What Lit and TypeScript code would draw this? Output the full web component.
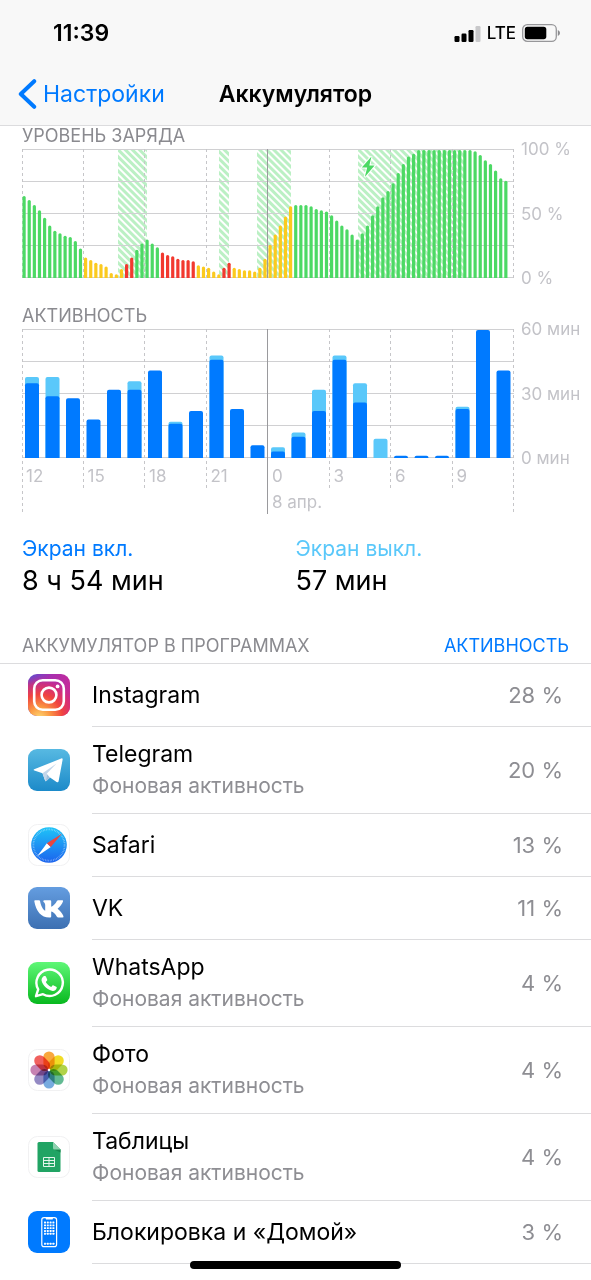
import { LitElement, html, svg, css, nothing, type SVGTemplateResult, type TemplateResult } from "lit";
import { customElement, property } from "lit/decorators.js";

type Tone = "green" | "yellow" | "red";

/** Charge level in percent, one sample every 15 minutes, grouped by colour. */
const CHARGE: Array<[Tone, number[]]> = [
  ["green", [64, 61, 57, 53, 47, 41, 37, 35, 33, 32, 29, 23]],
  ["yellow", [16, 14, 12, 11, 9, 4, 3, 7]],
  ["red", [11, 16]],
  ["green", [22, 27, 30, 27, 24]],
  ["red", [20, 18, 17, 15, 14, 14, 13]],
  ["yellow", [10, 9, 8, 5, 3]],
  ["red", [8, 12]],
  ["yellow", [8, 7, 6, 6, 5, 8, 15, 26, 34, 41, 48, 56]],
  [
    "green",
    [
      57, 57, 57, 56, 54, 53, 52, 49, 45, 41, 38, 34, 30, 35, 41, 49, 56, 63, 68, 74, 82, 89, 95, 97,
      100, 100, 100, 100, 100, 100, 100, 100, 100, 100, 100, 99, 96, 92, 89, 84, 78, 76,
    ],
  ],
];

/** Charging periods as [start, end] in plot units. */
const CHARGING: Array<[number, number]> = [[96, 125], [197, 207], [235, 269], [336, 442]];

/** Minutes of activity per hour as [screen on, total]. */
const ACTIVITY: Array<[number, number]> = [
  [35, 38], [29, 38], [28, 28], [18, 18], [32, 32], [32, 36], [41, 41], [16, 17],
  [22, 22], [46, 48], [23, 23], [6, 6], [3, 5], [10, 12], [22, 32], [46, 48],
  [26, 35], [0, 9], [1, 1], [1, 1], [1, 1], [23, 24], [60, 60], [41, 41],
];

const HOURS = ["12", "15", "18", "21", "0", "3", "6", "9"];

const W = 492;
const H = 129;
const MIDNIGHT = 4;

const gridLines = (height: number, tail: number): SVGTemplateResult => svg`
  ${[0, 1, 2, 3, 4].map((i) => svg`<line class="rule" x1="0" x2=${W} y1=${0.5 + i * 32} y2=${0.5 + i * 32} />`)}
  ${[0, 1, 2, 3, 4, 5, 6, 7, 8].map((i) => {
    const x = Math.floor((i * (W - 0.5)) / 8) + 0.5;
    const long = i % 4 === 0;
    return svg`<line class=${i === MIDNIGHT ? "midnight" : "dash"} x1=${x} x2=${x} y1="0" y2=${long ? height : height - tail} />`;
  })}
`;

const chartStyles = css`
  :host {
    display: block;
  }
  .title {
    margin: 0;
    font-size: 18px;
    line-height: 20px;
    font-weight: 400;
    color: #8a8a8f;
  }
  .chart {
    display: grid;
    grid-template-columns: minmax(0, 1fr) 70px;
    column-gap: 7px;
    margin-top: 3px;
  }
  .plot {
    display: block;
    width: 100%;
    height: auto;
  }
  .scale {
    display: flex;
    flex-direction: column;
    justify-content: space-between;
    height: 151px;
    margin: -11px 0;
    font-size: 17px;
    line-height: 22px;
    white-space: nowrap;
    color: #c3c3c8;
  }
  .rule {
    stroke: #d0d0d2;
    stroke-width: 1;
  }
  .dash {
    stroke: #c6c6c9;
    stroke-width: 1;
    stroke-dasharray: 3 3;
  }
  .midnight {
    stroke: #9a9a9d;
    stroke-width: 1;
  }
`;

@customElement("charge-chart")
export class ChargeChart extends LitElement {
  static styles = [
    chartStyles,
    css`
      .green {
        fill: #4cd964;
      }
      .yellow {
        fill: #fbca1f;
      }
      .red {
        fill: #f2392f;
      }
      .stripe {
        stroke: #bbf0c4;
        stroke-width: 3;
      }
      .halo {
        fill: #4cd964;
        stroke: #fff;
        stroke-width: 2;
        paint-order: stroke;
      }
    `,
  ];

  render() {
    const samples = CHARGE.flatMap(([tone, levels]) => levels.map((level) => ({ tone, level })));
    const step = W / 96;
    return html`
      <h2 class="title">УРОВЕНЬ ЗАРЯДА</h2>
      <div class="chart">
        <svg class="plot" viewBox="0 0 ${W} ${H}" role="img" aria-label="Уровень заряда">
          <defs>
            <pattern id="hatch" width="5" height="5" patternUnits="userSpaceOnUse" patternTransform="rotate(45)">
              <line class="stripe" x1="0" x2="5" y1="2.5" y2="2.5" />
            </pattern>
          </defs>
          ${CHARGING.map(([a, b]) => svg`<rect x=${a} y="0" width=${b - a} height=${H} fill="url(#hatch)" />`)}
          ${gridLines(H, 0)}
          ${samples.map(({ tone, level }, i) => {
            const h = (level / 100) * 128;
            const x = 0.5 + i * step;
            return svg`<path class=${tone} d="M${x} ${H}v${1.5 - h}q0 -1.5 1.6 -1.5t1.6 1.5v${h - 1.5}z" />`;
          })}
          <path class="halo" d="M349.5 7.5L339.8 18.5H345.2L342.8 28L352.6 16.5H347.3Z" />
        </svg>
        <div class="scale"><span>100 %</span><span>50 %</span><span>0 %</span></div>
      </div>
    `;
  }
}

@customElement("activity-chart")
export class ActivityChart extends LitElement {
  static styles = [
    chartStyles,
    css`
      .stack {
        display: grid;
      }
      .stack > * {
        grid-area: 1 / 1;
      }
      .on {
        fill: #007aff;
      }
      .off {
        fill: #5ac8fa;
      }
      .hours {
        align-self: end;
        display: grid;
        grid-template-columns: repeat(8, minmax(0, 1fr));
        height: 51px;
        font-size: 17px;
        line-height: 26px;
        color: #c3c3c8;
      }
      .hour {
        padding-left: 4px;
        white-space: nowrap;
      }
      .date {
        display: block;
      }
    `,
  ];

  render() {
    const slot = W / 24;
    const bar = (cls: string, i: number, minutes: number) => {
      const h = (minutes / 60) * 128;
      const r = Math.min(2, h);
      return minutes
        ? svg`<path class=${cls} d="M${i * slot + 3} ${H}v${r - h}q0 ${-r} ${r} ${-r}h${14 - 2 * r}q${r} 0 ${r} ${r}v${h - r}z" />`
        : nothing;
    };
    return html`
      <h2 class="title">АКТИВНОСТЬ</h2>
      <div class="chart">
        <div class="stack">
          <svg class="plot" viewBox="0 0 ${W} 185" role="img" aria-label="Активность">
            ${gridLines(185, 24)}
            ${ACTIVITY.map(([on, total], i) => [total > on ? bar("off", i, total) : nothing, bar("on", i, on)])}
          </svg>
          <div class="hours">
            ${HOURS.map(
              (h, i) => html`<div class="hour">${h}${i === MIDNIGHT ? html`<span class="date">8 апр.</span>` : nothing}</div>`,
            )}
          </div>
        </div>
        <div class="scale"><span>60 мин</span><span>30 мин</span><span>0 мин</span></div>
      </div>
    `;
  }
}

const PETALS = ["#f9a12e", "#f0d913", "#a9cf3a", "#55b48a", "#6ba4dc", "#8b80bf", "#c177ab", "#ef5350"];

const ICONS: Record<string, SVGTemplateResult> = {
  instagram: svg`
    <defs>
      <linearGradient id="ig-a" x1="0" y1="0" x2="1" y2="0.25">
        <stop offset="0" stop-color="#5a4fd0" /><stop offset="0.5" stop-color="#a530b0" /><stop offset="1" stop-color="#c52a9a" />
      </linearGradient>
      <radialGradient id="ig-b" cx="0.27" cy="1.05" r="1.02">
        <stop offset="0" stop-color="#fed973" /><stop offset="0.25" stop-color="#fb9a44" />
        <stop offset="0.55" stop-color="#f0433f" /><stop offset="0.8" stop-color="#d92e74" stop-opacity="0.8" />
        <stop offset="1" stop-color="#c02c9a" stop-opacity="0" />
      </radialGradient>
    </defs>
    <rect width="42" height="42" rx="9" fill="url(#ig-a)" /><rect width="42" height="42" rx="9" fill="url(#ig-b)" />
    <g fill="none" stroke="#fff" stroke-width="2.6">
      <rect x="6.2" y="6.2" width="29.6" height="29.6" rx="8.5" /><circle cx="21" cy="21" r="7.4" />
    </g>
    <circle cx="29.6" cy="12.4" r="1.9" fill="#fff" />`,
  telegram: svg`
    <defs><linearGradient id="tg" x1="0" y1="0" x2="0" y2="1"><stop offset="0" stop-color="#57b9e2" /><stop offset="1" stop-color="#1c8ac9" /></linearGradient></defs>
    <rect width="42" height="42" rx="9" fill="url(#tg)" />
    <path fill="#fff" d="M6.2 20.3L33.2 9.5Q34.9 8.9 34.6 10.8L30.6 32.2Q30.2 34 28.6 33L22 28.5L18.6 31.8Q17.6 32.8 17 31.2L14.5 24.2L6.4 21.6Q5 21 6.2 20.3Z" />
    <path fill="#c3d6ea" d="M14.5 24.2L28.5 14.4L18.7 24.8L17.9 32.2Q17.4 32.3 17 31.2Z" />
    <path fill="#9fbfdc" d="M18.7 24.8L22 28.5L18.6 31.8Q18.2 32.2 17.9 32.2Z" />`,
  safari: svg`
    <defs><linearGradient id="sf" x1="0" y1="0" x2="0" y2="1"><stop offset="0" stop-color="#1fc4f8" /><stop offset="1" stop-color="#1b63ee" /></linearGradient></defs>
    <rect x="0.5" y="0.5" width="41" height="41" rx="9" fill="#fff" stroke="#f1f1f2" />
    <circle cx="21" cy="21" r="17.8" fill="url(#sf)" />
    <circle cx="21" cy="21" r="15.6" fill="none" stroke="#fff" stroke-opacity="0.5" stroke-width="1.8" stroke-dasharray="0.6 1.03" />
    <path fill="#fff" d="M9.2 32.2L18.9 19.2L22.8 23Z" /><path fill="#e9453f" d="M33.9 9.7L18.9 19.2L22.8 23Z" />`,
  vk: svg`
    <defs><linearGradient id="vk" x1="0" y1="0" x2="0" y2="1"><stop offset="0" stop-color="#649de0" /><stop offset="1" stop-color="#3d70b2" /></linearGradient></defs>
    <rect width="42" height="42" rx="9" fill="url(#vk)" />
    <path fill="#fff" d="M21.4 30.6C13.2 30.6 8 24.4 6.3 14.3Q6.1 13.2 7.2 13.2H11Q11.9 13.2 12.1 14.2C12.9 18.9 14.9 22.6 17.2 23.8V18.1C17.1 16.2 16.5 15.6 15.6 14.9C15 14.3 15.4 13.2 16.4 13.2H22.1Q23.2 13.2 23.2 14.3V19.8C25.3 19 27.6 16.6 28.9 14Q29.3 13.2 30.2 13.2H34.1Q35.5 13.2 35 14.5C34.1 16.9 31.6 20.2 29.6 21.7C31.8 23.2 34.3 26.3 35.4 29Q36 30.6 34.4 30.6H30.3Q29.4 30.6 28.9 29.8C27.4 27 25.4 25 23.2 24.6V29.6Q23.2 30.6 22.2 30.6Z" />`,
  whatsapp: svg`
    <defs><linearGradient id="wa" x1="0" y1="0" x2="0" y2="1"><stop offset="0" stop-color="#5ff777" /><stop offset="1" stop-color="#08b81f" /></linearGradient></defs>
    <rect width="42" height="42" rx="9" fill="url(#wa)" />
    <path fill="none" stroke="#fff" stroke-width="2.4" stroke-linejoin="round" d="M8 34.2L10.2 27.4A13.2 13.2 0 1 1 15 32.2Z" />
    <path fill="#fff" d="M16.8 14.1C17.4 14.1 17.8 14.2 18.1 14.9L19.2 17.6C19.4 18.1 19.2 18.6 17.8 20.1C18.9 22.3 20.7 23.9 23.2 25C24.6 23.3 24.9 23.1 25.6 23.4L28.2 24.7C28.8 25 28.8 25.3 28.7 26C28.3 28 26.3 29 24.8 28.9C20.3 28.3 14.6 23.6 13.6 18.7C13.4 16.9 14.6 14.1 16.8 14.1Z" />`,
  photos: svg`
    <rect x="0.5" y="0.5" width="41" height="41" rx="9" fill="#fff" stroke="#f1f1f2" />
    <g class="petals">
      ${PETALS.map((c, i) => svg`<rect x="15.4" y="2.4" width="11.2" height="17.8" rx="5.6" fill=${c} transform="rotate(${i * 45} 21 21)" />`)}
    </g>
    <circle cx="21" cy="21" r="1.2" fill="#fff" />`,
  sheets: svg`
    <rect x="0.5" y="0.5" width="41" height="41" rx="9" fill="#fff" stroke="#f1f1f2" />
    <path fill="#21a464" d="M11 6H25L32.5 13.5V34.5Q32.5 36 31 36H11Q9.5 36 9.5 34.5V7.5Q9.5 6 11 6Z" />
    <path fill="#17864f" d="M26 13.5H32.5V16.5Z" /><path fill="#8fd2b0" d="M25 6L32.5 13.5H26.5Q25 13.5 25 12Z" />
    <path fill="none" stroke="#e4f5ec" stroke-width="1" d="M15.5 21.5H26.5V30.5H15.5ZM15.5 24.5H26.5M15.5 27.5H26.5M21 21.5V30.5" />`,
  lock: svg`
    <rect width="42" height="42" rx="9" fill="#007aff" />
    <rect x="13.8" y="6.6" width="14.8" height="29" rx="2.2" fill="none" stroke="#fff" stroke-width="1.2" />
    <path fill="#fff" d="M17.4 6.6H25.2L24.6 8.4H18Z" />
    <g fill="#fff">
      ${[10.6, 13.4, 16.2, 19, 21.8, 31.8].map((y) =>
        [16, 18.8, 21.6, 24.4].map((x) => svg`<rect x=${x} y=${y} width="2" height="1.9" rx="0.4" />`),
      )}
    </g>`,
};

@customElement("app-row")
export class AppRow extends LitElement {
  @property() icon = "";
  @property() name = "";
  @property() note = "";
  @property() share = "";

  static styles = css`
    :host {
      display: flex;
      padding-left: 28px;
    }
    .icon {
      align-self: center;
      flex: none;
      width: 42px;
      height: 42px;
      margin: 0 22px 2px 0;
    }
    .petals {
      isolation: isolate;
    }
    .petals rect {
      mix-blend-mode: multiply;
      fill-opacity: 0.92;
    }
    .body {
      flex: 1;
      display: flex;
      align-items: center;
      justify-content: space-between;
      padding: 16px 28px 16px 0;
      border-bottom: 1px solid #dcdcde;
    }
    .name,
    .note {
      display: block;
    }
    .name {
      font-size: 23px;
      line-height: 30px;
    }
    .note {
      font-size: 21px;
      line-height: 28px;
      padding-top: 3px;
    }
    .note,
    .share {
      color: #8e8e93;
    }
    .share {
      font-size: 22px;
      line-height: 30px;
      white-space: nowrap;
    }
    .tall {
      padding-top: 12px;
      padding-bottom: 13px;
    }
  `;

  render(): TemplateResult {
    return html`
      <svg class="icon" viewBox="0 0 42 42" aria-hidden="true">${ICONS[this.icon]}</svg>
      <div class="body ${this.note ? "tall" : ""}">
        <div>
          <span class="name">${this.name}</span>
          ${this.note ? html`<span class="note">${this.note}</span>` : nothing}
        </div>
        <span class="share">${this.share} %</span>
      </div>
    `;
  }
}

const BACKGROUND = "Фоновая активность";
const APPS = [
  { icon: "instagram", name: "Instagram", note: "", share: 28 },
  { icon: "telegram", name: "Telegram", note: BACKGROUND, share: 20 },
  { icon: "safari", name: "Safari", note: "", share: 13 },
  { icon: "vk", name: "VK", note: "", share: 11 },
  { icon: "whatsapp", name: "WhatsApp", note: BACKGROUND, share: 4 },
  { icon: "photos", name: "Фото", note: BACKGROUND, share: 4 },
  { icon: "sheets", name: "Таблицы", note: BACKGROUND, share: 4 },
  { icon: "lock", name: "Блокировка и «Домой»", note: "", share: 3 },
];

@customElement("app-root")
export class AppRoot extends LitElement {
  static styles = css`
    :host {
      display: block;
      position: relative;
      min-height: 100vh;
      background: #fff;
      color: #000;
      font-family: Inter, "Liberation Sans", sans-serif;
    }
    .top {
      background: #f8f8f8;
      border-bottom: 1px solid #dcdcde;
    }
    .status {
      display: flex;
      align-items: center;
      justify-content: space-between;
      padding: 18px 31px 0 53px;
      height: 30px;
    }
    .time {
      font-size: 23px;
      font-weight: 600;
    }
    .signals {
      display: flex;
      align-items: center;
      gap: 6px;
      font-size: 17px;
      font-weight: 500;
    }
    .signals svg {
      display: block;
    }
    .nav {
      display: grid;
      grid-template-columns: 1fr auto 1fr;
      align-items: center;
      height: 62px;
      padding: 15px 18px 0;
    }
    .back {
      justify-self: start;
      display: flex;
      align-items: center;
      gap: 6px;
      color: #007aff;
      font-size: 23px;
      line-height: 30px;
      text-decoration: none;
    }
    .heading {
      margin: 0;
      font-size: 23px;
      line-height: 30px;
      font-weight: 600;
    }
    .charts {
      display: grid;
      gap: 28px;
      padding: 0 0 0 22px;
    }
    .stats {
      display: grid;
      grid-template-columns: 1fr 1fr;
      margin: 0;
      padding: 21px 22px 0;
    }
    .stats dt {
      font-size: 21px;
      line-height: 27px;
    }
    .stats dd {
      margin: 0;
      font-size: 27px;
      line-height: 38px;
    }
    .on {
      color: #007aff;
    }
    .off {
      color: #5ac8fa;
    }
    .bar {
      display: flex;
      align-items: center;
      justify-content: space-between;
      padding: 34px 22px 5px;
      border-bottom: 1px solid #dcdcde;
    }
    .label {
      margin: 0;
      font-size: 18px;
      line-height: 24px;
      font-weight: 400;
      color: #8a8a8f;
    }
    .toggle {
      padding: 0;
      border: 0;
      background: none;
      color: #007aff;
      font: inherit;
      font-size: 18px;
      line-height: 24px;
    }
    .home {
      position: absolute;
      left: 0;
      right: 0;
      bottom: 11px;
      width: 211px;
      height: 8px;
      margin: 0 auto;
      border-radius: 4px;
      background: #000;
    }
  `;

  render() {
    return html`
      <header class="top">
        <div class="status">
          <span class="time">11:39</span>
          <div class="signals">
            <svg width="27" height="17" viewBox="0 0 27 17" aria-hidden="true">
              <rect x="0.5" y="11" width="5" height="6" rx="1.2" /><rect x="7.5" y="8.5" width="5" height="8.5" rx="1.2" />
              <rect x="14.5" y="5" width="5" height="12" rx="1.2" /><rect x="21.5" y="1" width="5" height="16" rx="1.2" fill="#c8c8ca" />
            </svg>
            <span>LTE</span>
            <svg width="38" height="18" viewBox="0 0 38 18" aria-hidden="true">
              <rect x="0.7" y="0.7" width="33.6" height="16.6" rx="4.6" fill="none" stroke="#97979a" stroke-width="1.3" />
              <rect x="2.8" y="2.8" width="21.5" height="12.4" rx="2.6" />
              <path fill="#8b8b8e" d="M35.8 6Q38 7 38 9T35.8 12Z" />
            </svg>
          </div>
        </div>
        <nav class="nav">
          <a class="back" href="#">
            <svg width="19" height="30" viewBox="0 0 19 30" aria-hidden="true">
              <path d="M16.2 2.2L2.8 15L16.2 27.8" fill="none" stroke="#007aff" stroke-width="4" stroke-linecap="round" stroke-linejoin="round" />
            </svg>
            Настройки
          </a>
          <h1 class="heading">Аккумулятор</h1>
        </nav>
      </header>
      <main>
        <div class="charts">
          <charge-chart></charge-chart>
          <activity-chart></activity-chart>
        </div>
        <dl class="stats">
          <div><dt class="on">Экран вкл.</dt><dd>8 ч 54 мин</dd></div>
          <div><dt class="off">Экран выкл.</dt><dd>57 мин</dd></div>
        </dl>
        <div class="bar">
          <h2 class="label">АККУМУЛЯТОР В ПРОГРАММАХ</h2>
          <button class="toggle" type="button">АКТИВНОСТЬ</button>
        </div>
        ${APPS.map((a) => html`<app-row icon=${a.icon} name=${a.name} note=${a.note} share=${a.share}></app-row>`)}
      </main>
      <div class="home"></div>
    `;
  }
}
